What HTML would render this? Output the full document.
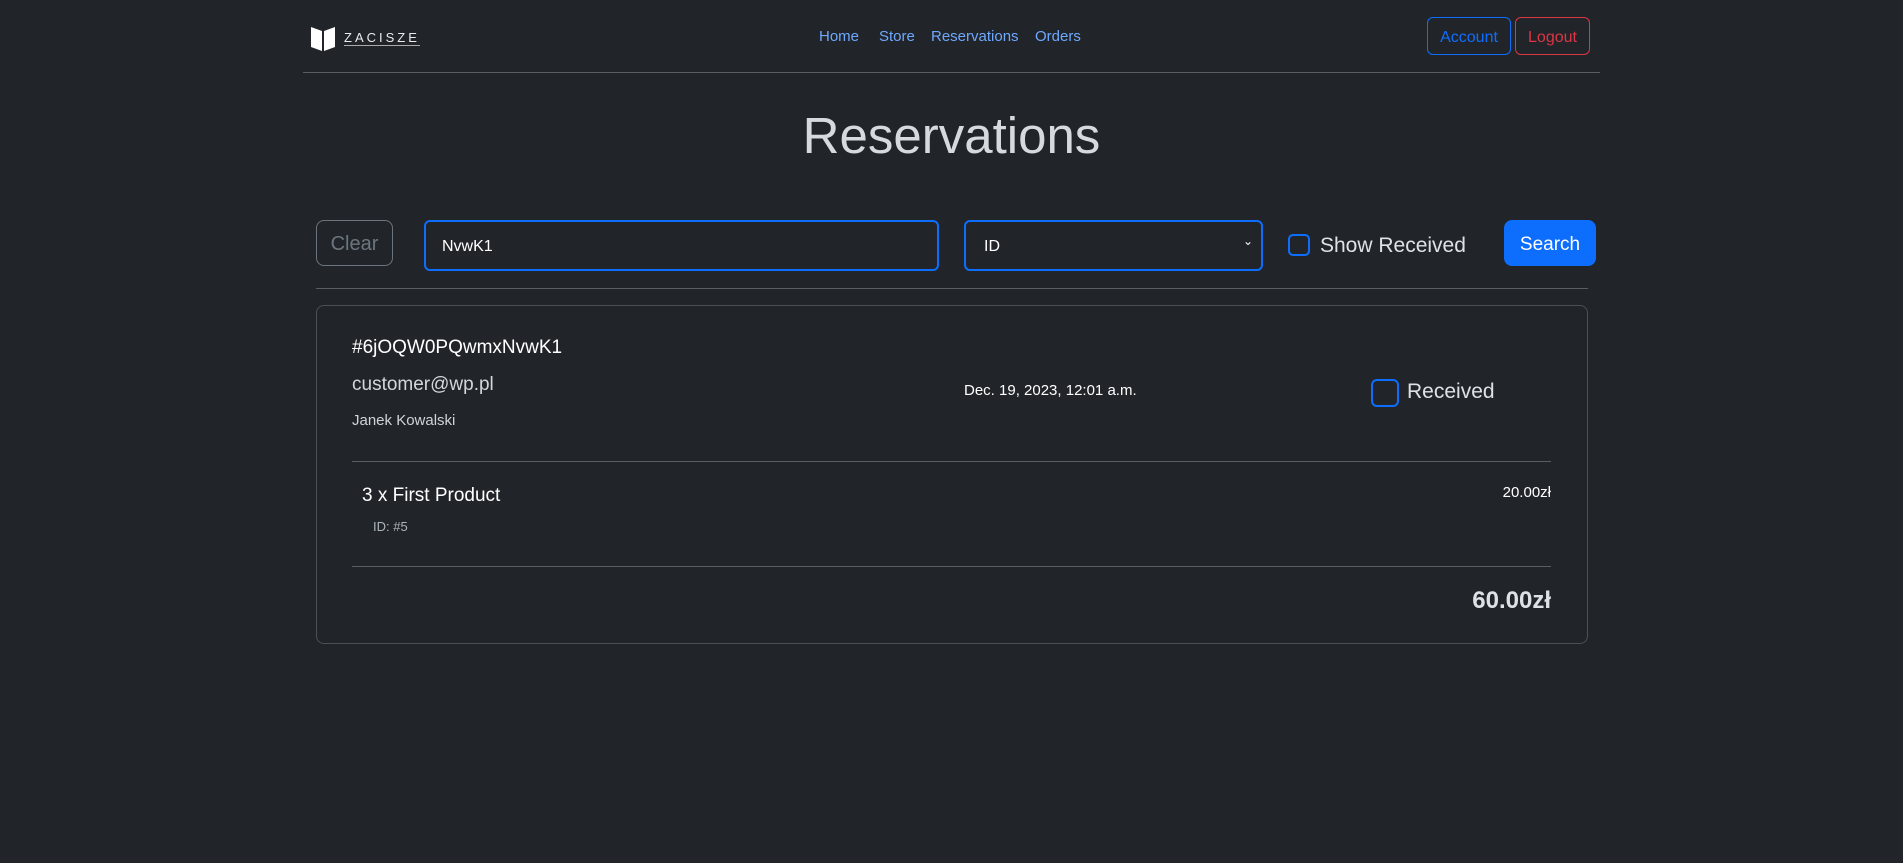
<!DOCTYPE html>
<html><head><meta charset="utf-8"><style>
*{box-sizing:border-box;margin:0;padding:0}
body{width:1903px;height:863px;background:#212529;color:#dee2e6;font-family:"Liberation Sans",sans-serif;position:relative;overflow:hidden}
.a{position:absolute;white-space:nowrap}
.btn{position:absolute;border-radius:6px;display:flex;align-items:center;justify-content:center}
.hr{position:absolute;height:1px;background:#5a5e63}
.cb{position:absolute;border:2px solid #0d6efd;border-radius:5px}
</style></head><body>
<svg class="a" style="left:310px;top:25px" width="26" height="26" viewBox="0 0 26 26"><path d="M1 2 L12 6 L12 26 L1 22Z M14 6 L25 2 L25 22 L14 26Z" fill="#fff"/></svg>
<div class="a" style="left:344px;top:30px;font-size:13px;letter-spacing:3px;color:#e9ecef;border-bottom:1px solid #aaa;line-height:15px">ZACISZE</div>
<div class="a" style="left:819px;top:28px;font-size:15px;color:#6ea8fe">Home</div>
<div class="a" style="left:879px;top:28px;font-size:15px;color:#6ea8fe">Store</div>
<div class="a" style="left:931px;top:28px;font-size:15px;color:#6ea8fe">Reservations</div>
<div class="a" style="left:1035px;top:28px;font-size:15px;color:#6ea8fe">Orders</div>
<div class="btn" style="left:1427px;top:17px;width:84px;height:38px;border:1px solid #0d6efd;color:#0d6efd;font-size:16px;padding-top:3px">Account</div>
<div class="btn" style="left:1515px;top:17px;width:75px;height:38px;border:1px solid #dc3545;color:#dc3545;font-size:16px;padding-top:3px">Logout</div>
<div class="hr" style="left:303px;top:72px;width:1297px"></div>
<div class="a" style="left:0;width:1903px;text-align:center;top:106px;font-size:51px;font-weight:normal;color:#d6dade">Reservations</div>
<div class="btn" style="left:316px;top:220px;width:77px;height:46px;border:1px solid #6c757d;color:#6c757d;font-size:20px;border-radius:8px;padding-top:3px">Clear</div>
<div class="a" style="left:424px;top:220px;width:515px;height:51px;border:2px solid #0d6efd;border-radius:6px;font-size:16px;padding:16px 16px;color:#fff">NvwK1</div>
<div class="a" style="left:964px;top:220px;width:299px;height:51px;border:2px solid #0d6efd;border-radius:6px;font-size:16px;padding:16px 18px;color:#fff">ID<span style="position:absolute;right:8px;top:12px;font-size:12px">&#8964;</span></div>
<div class="cb" style="left:1288px;top:234px;width:22px;height:22px"></div>
<div class="a" style="left:1320px;top:234px;font-size:21px">Show Received</div>
<div class="btn" style="left:1504px;top:220px;width:92px;height:46px;background:#0d6efd;color:#fff;font-size:19px;border-radius:8px;padding-top:4px">Search</div>
<div class="hr" style="left:316px;top:288px;width:1272px"></div>
<div class="a" style="left:316px;top:305px;width:1272px;height:339px;border:1px solid #495057;border-radius:8px"></div>
<div class="a" style="left:352px;top:337px;font-size:19px;color:#fff">#6jOQW0PQwmxNvwK1</div>
<div class="a" style="left:352px;top:374px;font-size:19px;color:#d3d7db">customer@wp.pl</div>
<div class="a" style="left:352px;top:412px;font-size:15px;color:#ced4da">Janek Kowalski</div>
<div class="a" style="left:964px;top:382px;font-size:15px;color:#fff">Dec. 19, 2023, 12:01 a.m.</div>
<div class="cb" style="left:1371px;top:379px;width:28px;height:28px;border-radius:6px"></div>
<div class="a" style="left:1407px;top:380px;font-size:21px">Received</div>
<div class="hr" style="left:352px;top:461px;width:1199px"></div>
<div class="a" style="left:362px;top:485px;font-size:19px;color:#fff">3 x First Product</div>
<div class="a" style="left:373px;top:519px;font-size:13px;color:#adb5bd">ID: #5</div>
<div class="a" style="right:352px;top:484px;font-size:15px;color:#fff">20.00zł</div>
<div class="hr" style="left:352px;top:566px;width:1199px"></div>
<div class="a" style="right:352px;top:587px;font-size:24px;font-weight:bold">60.00zł</div>
</body></html>
